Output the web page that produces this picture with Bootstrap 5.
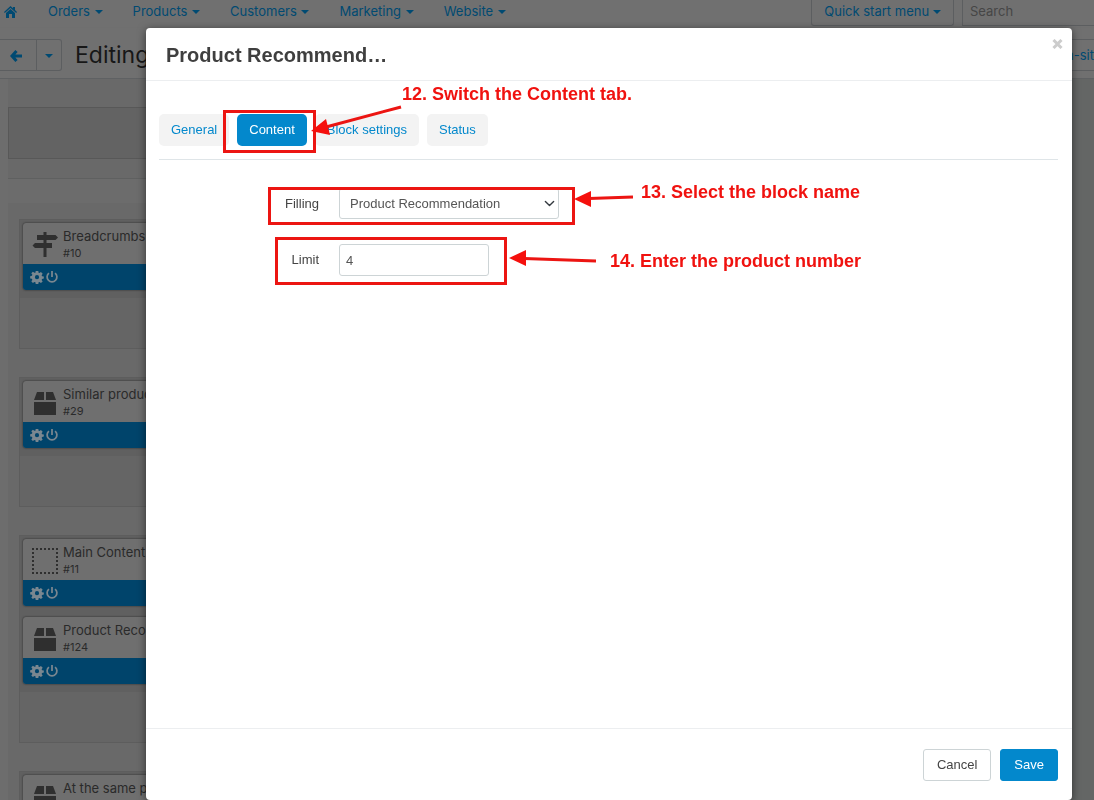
<!DOCTYPE html>
<html lang="en">
<head>
<meta charset="utf-8">
<meta name="viewport" content="width=device-width, initial-scale=1">
<title>Editing layout – Product Recommendation</title>
<link href="https://cdn.jsdelivr.net/npm/bootstrap@5.3.0/dist/css/bootstrap.min.css" rel="stylesheet">
<style>
:root { --blue: #0388cc; --dim-blue: #004a72; --dim: #707070; --dim-line: #5c5e60; }
body { font: 13px/18px Inter, sans-serif; background: var(--dim); color: #2a2a2a; height: 100vh; overflow: hidden; }
a { text-decoration: none; color: var(--dim-blue); }
.caret { display: inline-block; border: 4px solid transparent; border-top-color: currentColor; border-bottom: 0; margin-left: 1px; vertical-align: 2px; }
.topbar { height: 28px; padding-left: 4px; }
.topbar .main-links { gap: 30px; margin-left: 31px; }
.topbar a, .topbar input { height: 22px; line-height: 22px; }
.topbar .quick { height: 26px; width: 143px; border: 1px solid var(--dim-line); border-top: 0; border-radius: 0 0 3px 3px; color: var(--dim-blue); background: none; padding: 0 0 4px; }
.topbar .search-box { height: 26px; width: 132px; border: 1px solid var(--dim-line); border-width: 0 0 1px 1px; background: none; padding: 0 0 4px 7px; }
.search-box::placeholder { color: #464646; opacity: 1; }
.actions { height: 51px; padding-top: 4px; border-bottom: 1px solid #5f6163; box-shadow: 0 1px 2px #00000022; }
.actions button { height: 32px; border: 1px solid var(--dim-line); background: none; color: var(--dim-blue); padding: 0; }
.actions .back-btn { width: 37px; border-left: 0; padding-right: 5px; }
.actions .more-btn { width: 25px; border-left: 0; border-radius: 0 3px 3px 0; }
.actions .site-btn { margin-left: auto; width: 102px; border-right: 0; text-align: right; white-space: nowrap; }
.actions h1 { font-size: 23px; line-height: 32px; margin: 0 0 0 13px; color: #171717; font-weight: 400; }
.canvas { background: #646665; border-left: 8px solid #6d6d6d; min-height: 0; }
.lane { width: 240px; background: #696969; }
.lane-top { padding-top: 28px; }
.stub { height: 52px; background: #636363; border: 1px solid #585858; }
.rule { height: 25px; margin-top: 19px; border-top: 1px solid #5f6060; background: #6c6c6c; }
.area { margin: 0 0 28px 11px; border: 1px solid #5d5d5d; background: #656565; padding-bottom: 50px; }
.area-blocks { background: #606060; padding: 3px 0 8px 3px; display: grid; gap: 11px; }
.tile { background: #6f6f6f; border-radius: 3px; height: 67px; box-shadow: 0 0 2px #222; white-space: nowrap; }
.tile-head { height: 41px; padding: 5px 0 0 9px; gap: 5px; }
.tile-head svg { width: 26px; height: 26px; margin-top: 4px; flex: none; }
.tile-head div { line-height: 17px; }
.tile-head span { display: block; font-size: 11px; }
.tile-foot { height: 26px; background: #00446b; color: #7a8790; padding-left: 7px; gap: 1px; border-radius: 0 0 3px 3px; }
.tile-foot svg { width: 14px; height: 14px; }
.cover { font: 13px/18px "Liberation Sans", sans-serif; color: #444; overflow: hidden; }
.cover .modal-dialog { max-width: none; margin: 28px 22px 0 146px; }
.cover .modal-content { min-height: calc(100vh - 28px); border: 0; border-radius: 4px; box-shadow: 0 2px 8px #0008; }
.cover .modal-header { height: 53px; padding: 2px 20px 0; border-color: #eceef0; }
.cover h2 { font-size: 20px; line-height: 26px; font-weight: 700; margin: 0; color: #3f3f3f; }
.cover .shut { position: absolute; top: 11px; right: 9px; width: 11px; height: 10px; padding: 0; border: 0; background: none; color: #ccc; line-height: 0; }
.cover .modal-body { padding: 33px 14px 0 13px; }
.tab-row { gap: 8px; padding-bottom: 13px; border-bottom: 1px solid #dfe5e8; }
.tab-row .nav-link { height: 32px; padding: 6px 12px; line-height: 20px; border-radius: 5px; background: #f3f3f3; color: var(--blue); }
.tab-row .nav-link.active { background: var(--blue); color: #fff; }
.fields { margin-top: 28px; display: grid; grid-template-columns: 160px 220px; column-gap: 20px; row-gap: 25px; align-items: center; }
.fields label { text-align: right; }
.fields .form-control, .fields .form-select { font-size: 13px; line-height: 18px; height: 32px; border: 1px solid #cdd4d6; border-radius: 3px; color: #555; padding: 0 6px; }
.fields .form-select { padding-left: 10px; background-position: right 3px center; background-size: 11px 11px; height: 31px; }
.fields input.form-control { width: 150px; }
.cover .modal-footer { height: 72px; padding: 0 14px; gap: 9px; border-color: #eceef0; }
.cover .modal-footer .btn { margin: 0; height: 32px; padding: 0 13px; font-size: 13px; border-radius: 3px; border-color: #cdd4d6; color: #444; }
.cover .modal-footer .save { background: var(--blue); border-color: var(--blue); color: #fff; }
.notes { position: absolute; left: 0; top: 0; pointer-events: none; }
.note { position: absolute; font-size: 18px; line-height: 22px; font-weight: 700; color: #f0120f; white-space: nowrap; }
</style>
</head>
<body class="d-flex flex-column">
<svg width="0" height="0" class="position-absolute" aria-hidden="true">
<symbol id="gear" viewBox="0 0 16 16"><path fill="currentColor" fill-rule="evenodd" d="M6.500 1h3l.3 2 1 .5 1.700-1.200 2 2-1.200 1.700.5 1 2 .3v2.500l-2 .4-.5 1.200 1.200 1.700-2 1.800-1.700-1.200-1 .4-.3 2h-3l-.3-2-1.200-.5-1.700 1.200-1.800-1.800 1.200-1.700L2.200 10l-2-.4V7l2-.4.5-1.200-1.200-1.700 1.800-1.800 1.700 1.200L6.200 3zM8 5.800a2.400 2.400 0 1 0 0 4.800a2.400 2.400 0 1 0 0-4.800z"/></symbol>
<symbol id="power" viewBox="0 0 16 16"><path d="M8 1v7M4.500 3.500a5.600 5.600 0 1 0 7 0" fill="none" stroke="currentColor" stroke-width="2"/></symbol>
<symbol id="box" viewBox="0 0 26 26"><path fill="#2f2f2f" d="M5 2h7v8H2zM14 2h7l3 8H14zM2 12h22v13H2z"/></symbol>
<symbol id="signs" viewBox="0 0 26 26"><path fill="#2f2f2f" d="M11.500 0h3v3h9l2.500 2.500L23.500 8h-9v3H20v5h-5.500v9h-3v-9H3L.5 13.500 3 11h8.500V8H5V3h6.500z"/></symbol>
<symbol id="dots" viewBox="0 0 26 26"><path d="M0 1h26M0 25h26M1 4v20M25 4v20" fill="none" stroke="#2f2f2f" stroke-width="2" stroke-dasharray="2 2"/></symbol>
</svg>

<header class="topbar d-flex flex-shrink-0">
  <a href="#" aria-label="Home"><svg width="13" height="12" viewBox="0 0 13 12" fill="currentColor"><path d="M6.500 0 9 2.200V1h2v3l2 2-.8.900L6.500 2 .8 6.900 0 6zM6.500 3 11 7v5H8V8H5v4H2V7z"/></svg></a>
  <nav class="main-links d-flex">
    <a href="#">Orders <i class="caret"></i></a><a href="#">Products <i class="caret"></i></a><a href="#">Customers <i class="caret"></i></a><a href="#">Marketing <i class="caret"></i></a><a href="#">Website <i class="caret"></i></a>
  </nav>
  <button class="quick ms-auto" type="button">Quick start menu <i class="caret m-0"></i></button>
  <input class="search-box ms-2" type="search" placeholder="Search" aria-label="Search">
</header>
<div class="actions d-flex align-items-center flex-shrink-0">
  <button class="back-btn" type="button" aria-label="Back"><svg width="12" height="12" viewBox="0 0 12 12" fill="none" stroke="currentColor" stroke-width="3"><path d="M6.500 1 2 6l4.500 5M2 6h10"/></svg></button>
  <button class="more-btn" type="button" aria-label="More"><i class="caret m-0"></i></button>
  <h1>Editing</h1>
  <button class="site-btn" type="button">On-sit</button>
</div>
<main class="canvas flex-grow-1 overflow-hidden">
  <div class="lane">
    <div class="lane-top"><div class="stub"></div></div>
    <div class="rule"></div>
    <div class="pt-3">
      <section class="area"><div class="area-blocks">
        <article class="tile"><div class="tile-head d-flex"><svg><use href="#signs"/></svg><div>Breadcrumbs<span>#10</span></div></div><div class="tile-foot d-flex align-items-center"><svg><use href="#gear"/></svg><svg><use href="#power"/></svg></div></article>
      </div></section>
      <section class="area"><div class="area-blocks">
        <article class="tile"><div class="tile-head d-flex"><svg><use href="#box"/></svg><div>Similar products<span>#29</span></div></div><div class="tile-foot d-flex align-items-center"><svg><use href="#gear"/></svg><svg><use href="#power"/></svg></div></article>
      </div></section>
      <section class="area"><div class="area-blocks">
        <article class="tile"><div class="tile-head d-flex"><svg><use href="#dots"/></svg><div>Main Content<span>#11</span></div></div><div class="tile-foot d-flex align-items-center"><svg><use href="#gear"/></svg><svg><use href="#power"/></svg></div></article>
        <article class="tile"><div class="tile-head d-flex"><svg><use href="#box"/></svg><div>Product Recom<span>#124</span></div></div><div class="tile-foot d-flex align-items-center"><svg><use href="#gear"/></svg><svg><use href="#power"/></svg></div></article>
      </div></section>
      <section class="area mb-0 pb-0"><div class="area-blocks pb-0">
        <article class="tile"><div class="tile-head d-flex"><svg><use href="#box"/></svg><div>At the same price</div></div></article>
      </div></section>
    </div>
  </div>
</main>

<div class="modal cover d-block" role="dialog" aria-labelledby="dlg-title">
  <div class="modal-dialog">
    <div class="modal-content">
      <div class="modal-header">
        <h2 id="dlg-title">Product Recommend…</h2>
        <button class="shut" type="button" aria-label="Close"><svg width="11" height="10" viewBox="0 0 11 10" stroke="currentColor" stroke-width="3"><path d="m1.500 1 8 8m0-8-8 8"/></svg></button>
      </div>
      <div class="modal-body">
        <nav class="nav tab-row">
          <a class="nav-link" href="#">General</a><a class="nav-link active" href="#">Content</a><a class="nav-link" href="#">Block settings</a><a class="nav-link" href="#">Status</a>
        </nav>
        <form class="fields">
          <label for="filling">Filling</label>
          <select class="form-select" id="filling"><option>Product Recommendation</option></select>
          <label for="limit">Limit</label>
          <input class="form-control" id="limit" type="text" value="4">
        </form>
      </div>
      <div class="modal-footer">
        <button class="btn" type="button">Cancel</button>
        <button class="btn save" type="button">Save</button>
      </div>
      <svg class="notes" width="740" height="270" viewBox="0 0 740 270" fill="none" stroke="#ec1512" stroke-width="3" aria-hidden="true">
        <path d="M78.500 83.500h90v40h-90zM123.500 160.500h304v35h-304zM130.500 210.500h229v45h-229z"/>
        <path d="M255 79 180 99M487 169l-44 1.500M450 233l-72-2.500"/>
        <path fill="#f5100d" stroke="none" d="m165 103 15-12 4 16zM428 171l17-8v16zM363 230l17-8v16z"/>
      </svg>
      <div class="note" style="left:256px;top:55px">12. Switch the Content tab.</div>
      <div class="note" style="left:495px;top:153px">13. Select the block name</div>
      <div class="note" style="left:464px;top:222px">14. Enter the product number</div>
    </div>
  </div>
</div>
<script src="https://cdn.jsdelivr.net/npm/bootstrap@5.3.0/dist/js/bootstrap.bundle.min.js"></script>
</body>
</html>
